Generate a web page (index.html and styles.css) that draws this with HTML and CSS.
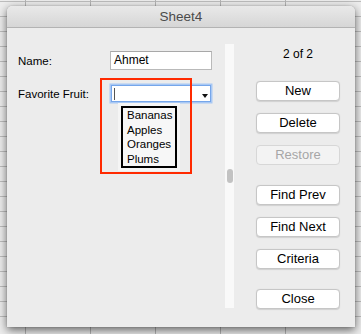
FILE: index.html
```html
<!DOCTYPE html>
<html>
<head>
<meta charset="utf-8">
<link rel="stylesheet" href="styles.css">
</head>
<body>
<div class="desk">
  <div class="dialog">
    <div class="titlebar">Sheet4</div>
    <div class="content">
      <div class="left">
        <div class="row">
          <span class="label">Name:</span>
          <div class="input">Ahmet</div>
        </div>
        <div class="row row2">
          <span class="label">Favorite Fruit:</span>
          <div class="combo">
            <span class="caret"></span>
            <span class="arrow"></span>
            <div class="redbox"></div>
            <div class="list">
              <div class="list-inner">
                <div>Bananas</div>
                <div>Apples</div>
                <div>Oranges</div>
                <div>Plums</div>
              </div>
            </div>
          </div>
        </div>
      </div>
      <div class="scroll"><div class="thumb"></div></div>
      <div class="right">
        <div class="count">2 of 2</div>
        <div class="btn first">New</div>
        <div class="btn">Delete</div>
        <div class="btn disabled">Restore</div>
        <div class="btn sep">Find Prev</div>
        <div class="btn">Find Next</div>
        <div class="btn">Criteria</div>
        <div class="btn sep">Close</div>
      </div>
    </div>
  </div>
</div>
</body>
</html>
```
FILE: styles.css
```css
html, body {
  margin: 0;
  padding: 0;
}
body {
  width: 361px;
  height: 334px;
  overflow: hidden;
  font-family: "Liberation Sans", Arial, sans-serif;
  background-color: #ededed;
  background-image:
    repeating-linear-gradient(to right, transparent 0 64px, #b4b4b4 64px 65px),
    repeating-linear-gradient(to bottom, transparent 0 14px, #bdbdbd 14px 15px);
  background-position: -39px 0, 0 -13px;
}
.desk {
  padding: 6px 6px 0 7px;
}
.dialog {
  width: 348px;
  height: 321px;
  background: #ececec;
  border-radius: 5px 5px 0 0;
  box-shadow: 0 3px 10px rgba(0, 0, 0, 0.6), 0 0 1px rgba(0, 0, 0, 0.4);
  display: flex;
  flex-direction: column;
}
.titlebar {
  height: 21px;
  line-height: 21px;
  border-bottom: 1px solid #b3b3b3;
  border-radius: 5px 5px 0 0;
  background: linear-gradient(to bottom, #e9e9e9, #d6d6d6);
  text-align: center;
  font-size: 13.5px;
  color: #4b4b4b;
}
.content {
  flex: 1;
  display: flex;
}
.left {
  width: 207px;
  padding: 23px 0 0 11px;
}
.row {
  display: flex;
  align-items: center;
  height: 19px;
}
.row2 {
  margin-top: 14px;
}
.label {
  width: 92px;
  font-size: 11.5px;
  color: #000;
}
.input {
  box-sizing: border-box;
  width: 102px;
  height: 19px;
  background: #fff;
  border: 1px solid #b9b9b9;
  border-top-color: #a8a8a8;
  font-size: 12px;
  line-height: 17px;
  padding-left: 3px;
  color: #000;
}
.combo {
  position: relative;
  box-sizing: border-box;
  width: 100px;
  height: 17px;
  margin-left: 1px;
  background: #fff;
  border: 1px solid #76a6ea;
  box-shadow: 0 0 0 1.5px #a8c8f4;
}
.caret {
  position: absolute;
  left: 2px;
  top: 2px;
  width: 1px;
  height: 12px;
  background: #555;
}
.arrow {
  position: absolute;
  right: 2px;
  top: 8px;
  width: 0;
  height: 0;
  border-left: 3.5px solid transparent;
  border-right: 3.5px solid transparent;
  border-top: 4px solid #111;
}
.redbox {
  position: absolute;
  left: -12px;
  top: -8px;
  width: 88px;
  height: 92px;
  border: 2px solid #ff2a00;
}
.list {
  position: absolute;
  left: 6px;
  top: 17px;
  padding: 3px;
  background: #f5f5f5;
}
.list-inner {
  box-sizing: border-box;
  width: 56px;
  height: 62px;
  border: 2px solid #000;
  padding: 0 0 0 4px;
  font-size: 11.5px;
  line-height: 14.6px;
  color: #000;
  background: #f7f7f7;
  white-space: nowrap;
}
.scroll {
  box-sizing: border-box;
  width: 9px;
  height: 264px;
  margin-top: 16px;
  background: #f9f9f9;
  padding: 125px 0 0 2px;
}
.thumb {
  width: 6px;
  height: 14px;
  border-radius: 3px;
  background: #c2c2c2;
}
.right {
  flex: 1;
  display: flex;
  flex-direction: column;
  align-items: flex-start;
  padding-left: 22px;
  gap: 12px;
}
.count {
  width: 84px;
  text-align: center;
  margin-top: 18px;
  font-size: 12px;
  line-height: 16px;
  color: #000;
}
.btn {
  box-sizing: border-box;
  width: 84px;
  height: 20px;
  border: 1px solid #c6c6c6;
  border-radius: 4px;
  background: #fff;
  box-shadow: 0 0.5px 1px rgba(0, 0, 0, 0.12);
  text-align: center;
  font-size: 13px;
  line-height: 18px;
  color: #000;
}
.btn.first {
  margin-top: 7px;
}
.btn.sep {
  margin-top: 8px;
}
.btn.disabled {
  background: #f3f3f3;
  border-color: #d7d7d7;
  color: #a6a6a6;
  box-shadow: none;
}
```
